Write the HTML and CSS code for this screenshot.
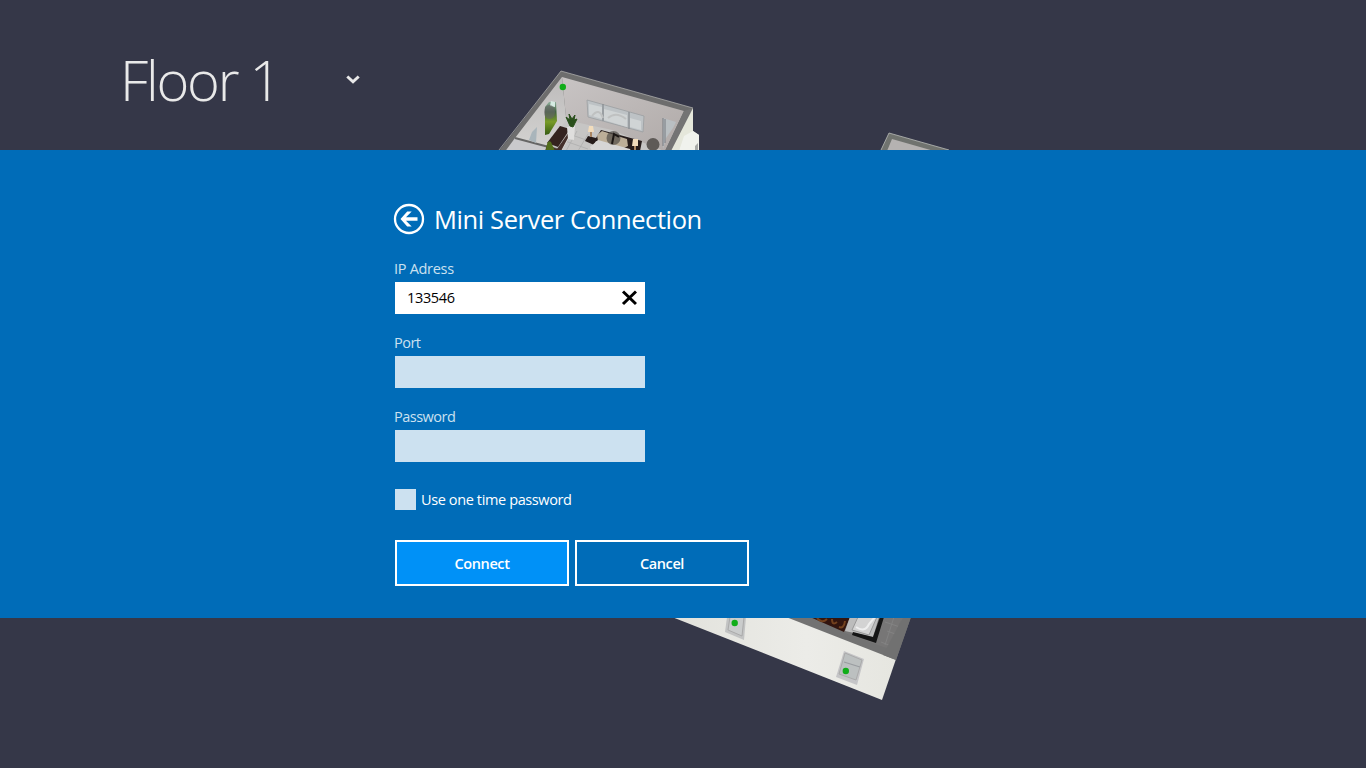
FILE: index.html
```html
<!DOCTYPE html>
<html lang="en">
<head>
<meta charset="utf-8">
<title>Mini Server Connection</title>
<link rel="stylesheet" href="styles.css">
</head>
<body>
<svg class="floorplan" viewBox="0 0 1366 768" aria-hidden="true">
  <defs>
    <linearGradient id="wall" x1="0" y1="0" x2="1" y2="1"><stop offset="0" stop-color="#c8c4c4"/><stop offset="1" stop-color="#b0aaa8"/></linearGradient>
    <linearGradient id="side" x1="0" y1="0" x2="0" y2="1"><stop offset="0" stop-color="#bdbbbb"/><stop offset="1" stop-color="#d3d2d0"/></linearGradient>
    <linearGradient id="facade" x1="0" y1="0" x2="1" y2="0"><stop offset="0" stop-color="#e2e2dc"/><stop offset=".6" stop-color="#ecece8"/><stop offset="1" stop-color="#e6e6e0"/></linearGradient>
    <linearGradient id="art" x1="0" y1="0" x2="0" y2="1"><stop offset="0" stop-color="#8fae9c"/><stop offset=".3" stop-color="#416340"/><stop offset=".6" stop-color="#789b27"/><stop offset="1" stop-color="#355b14"/></linearGradient>
  </defs>
  <!-- bedroom -->
  <path d="M561 71 693 108 672 151H499z" fill="#6d6d6d"/>
  <path d="M562 77 684 111 665 151H566V117z" fill="url(#wall)"/>
  <path d="M562 77 515 138 549 147 568 124 566 117z" fill="url(#side)"/>
  <path d="M566 120 546 151H664L612 130z" fill="#c6c5c4"/>
  <path d="M569 134 592 142M565 141 588 149M577 131 566 151M588 134 578 151" stroke="#aaa" stroke-width=".7"/>
  <path d="M515 138 560 150 558 153H504z" fill="#c9c9cc"/>
  <path d="M515 138 560 150" stroke="#666" stroke-width="2"/>
  <path d="M529 140 532 132 537 127 536 143z" fill="#a9b5bb"/>
  <path d="M545 107 549 102 556 102 557 121 549 134 545 135z" fill="url(#art)"/>
  <path d="M551 101 555 102 555 107 550 106z" fill="#d5ebe2"/>
  <ellipse cx="549.500" cy="112" rx="5.500" ry="7" fill="#666" opacity=".62"/>
  <path d="M561 143 569 132 570 136 562 150z" fill="#e2dfda"/>
  <path d="M547 143 560 126 570 129 558 147z" fill="#34231f"/>
  <path d="M547 145 557 149 569 132V136L561 151H545z" fill="#44302b"/>
  <path d="M546 150Q547 139 551 142L555 151z" fill="#526e1c"/>
  <path d="M567 127 575 126 574 140 568 139z" fill="#dfdedd"/>
  <path d="M570 126 566 117 570 120 569 114 572 119 575 115 574 120 577 119 573 127z" fill="#294f1b" stroke="#294f1b"/>
  <path d="M587 100 644 116 643 132 588 117z" fill="#bdc2c5" stroke="#9a9ea1" stroke-width=".8"/>
  <path d="M589 104 602 107 602 119 589 115zM604 109 627 115 627 127 604 120zM630 118 641 121 641 130 630 127z" fill="#d0d4d5"/>
  <path d="M603 104V121M629 112V129" stroke="#888d91" stroke-width="1.300"/>
  <path d="M592 116Q599 107 603 118M608 118Q616 111 626 119" fill="none" stroke="#bfc1c1" stroke-width="2"/>
  <path d="M585 141 588 136 596 138 601 130 642 141 640 151H631L596 141 594 145z" fill="#261c1b"/>
  <path d="M597 135 602 131 627 139 628 146 622 149 598 141z" fill="#bcae98"/>
  <path d="M590 147 598 140 630 149 631 151H592z" fill="#d6d5d5"/>
  <circle cx="613.500" cy="138" r="7" fill="#504b47" opacity=".7"/>
  <path d="M612 144 614 134 619 137" fill="none" stroke="#1c1715" stroke-width="2"/>
  <path d="M589 126 593 126 594 132 588 132zM633 139 638 139 638 146 632 146z" fill="#f2dcbc"/>
  <path d="M591 132V137M635 146V151" stroke="#a98562" stroke-width="2"/>
  <circle cx="653" cy="144.500" r="6.500" fill="#5e5a57"/>
  <path d="M663 118 676 122 673 128 666 138 663 149z" fill="#b9bfc2"/>
  <path d="M663 118V146M665 119V143" stroke="#777b80"/>
  <path d="M684 111 665 151H672L693 108z" fill="#747474"/>
  <path d="M693 108V131L699 135V151H671z" fill="#e5e7db"/>
  <path d="M684 136 693 131 699 135V151H679z" fill="#f0f2ed"/>
  <path d="M695 151V146L698 143V151z" fill="#a7aaa8"/>
  <path d="M499 150 561 71 693 108" fill="none" stroke="#b7b7b5" stroke-width=".7"/>
  <!-- right wing -->
  <path d="M889 133 949 150V152H880z" fill="#70736f"/>
  <path d="M892 139 934 151H887z" fill="#b5b2b1"/>
  <path d="M881 150 889 133 949 150" fill="none" stroke="#b9bbb7" stroke-width=".8"/>
  <!-- lower facade -->
  <path d="M672 617H790L896 659 882 700z" fill="url(#facade)"/>
  <path d="M786 617H911L896 660z" fill="#727272"/>
  <path d="M809 617H903L889 649 850 635z" fill="#777676"/>
  <path d="M810 617H850L844 632z" fill="#32150f"/>
  <path d="M817 618Q822 624 827 619M832 619Q832 626 837 622M839 627Q844 629 845 621" fill="none" stroke="#73411e" stroke-width="2"/>
  <path d="M850 617H879L873 637 845 631z" fill="#bcbcbc"/>
  <path d="M858 617 852 630 869 635 877 617" fill="#d3d3d3" stroke="#999"/>
  <path d="M856 627Q865 633 869 624L875 617" fill="none" stroke="#eee" stroke-width="2"/>
  <path d="M880 617H884L876 643 852 635 853 632 873 637z" fill="#151515"/>
  <path d="M894 617 885 645M903 617 892 648M887 631 898 635M881 642 891 646M885 622 903 628" stroke="#858585" stroke-width=".8"/>
  <path d="M903 617H911L896 660 883 655z" fill="#717171"/>
  <path d="M727 617H746L744 640 725 632z" fill="#c2c3c3"/>
  <path d="M730 617H744L742 636 728 630z" fill="#cacccc" stroke="#aaa"/>
  <path d="M844 651 864 659 857 685 836 677z" fill="#c5c5c7"/>
  <path d="M845 653 862 660 856 680 839 674z" fill="#bcc0c0" stroke="#aaa"/>
  <path d="M844 662 860 667" stroke="#999ca0" stroke-width="1.300"/>
  <g fill="#10ad19"><circle cx="562.800" cy="87" r="3.200"/><circle cx="734.700" cy="623" r="3.200"/><circle cx="845.800" cy="671" r="3.200"/></g>
</svg>
<div class="page">
  <header class="header">
    <h1 class="floor">Floor 1</h1>
    <svg class="chevron" width="14" height="10" viewBox="0 0 14 10"><path d="M1.300 1.500 7 6.800 12.700 1.500" fill="none" stroke="#e9e9e9" stroke-width="3"/></svg>
  </header>
  <main class="dialog">
    <form class="form">
      <div class="heading">
        <svg width="32" height="32" viewBox="0 0 32 32"><circle cx="16" cy="16" r="14" fill="none" stroke="#fff" stroke-width="2.300"/><path d="M14.200 8.500H18.700L13 14.300H24.500V17.700H13L18.700 23.500H14.200L7.500 16z" fill="#fff"/></svg>
        <h2 class="title">Mini Server Connection</h2>
      </div>
      <label class="label ip" for="ip">IP Adress</label>
      <div class="field active"><input id="ip" class="input" value="133546"><svg class="clear" width="16" height="16" viewBox="0 0 16 16"><path d="M2 1.500 15 14M15 1.500 2 14" stroke="#000" stroke-width="3"/></svg></div>
      <label class="label port" for="port">Port</label>
      <div class="field"><input id="port" class="input"></div>
      <label class="label password" for="password">Password</label>
      <div class="field"><input id="password" class="input" type="password"></div>
      <div class="once"><span class="box"></span><span class="once-text">Use one time password</span></div>
      <div class="actions"><button class="button primary" type="button"><span class="connect">Connect</span></button><button class="button" type="button"><span class="cancel">Cancel</span></button></div>
    </form>
  </main>
</div>
</body>
</html>
```
FILE: styles.css
```css
* { box-sizing: border-box; }
body {
  margin: 0;
  background: #353748;
  color: #fff;
  font-family: "Open Sans", "Noto Sans", sans-serif;
  overflow: hidden;
}
.floorplan { position: absolute; inset: 0; width: 1366px; height: 768px; z-index: -1; }
.page { display: grid; grid-template-rows: 150px 468px 150px; height: 768px; }
.header { display: flex; align-items: flex-start; padding: 41px 0 0 120px; }
.floor { margin: 0; width: 226px; font-size: 56px; line-height: 76px; font-weight: 300; letter-spacing: -2.2px; color: #e9e9e9; white-space: nowrap; }
.chevron { margin-top: 34px; }
.dialog { background: #006cb8; padding: 53px 0 0 395px; }
.form { display: flex; flex-direction: column; width: 360px; }
.heading { display: flex; align-items: center; height: 32px; margin-left: -2px; gap: 9px; }
.title { margin: 0; font-size: 25.5px; line-height: 32px; font-weight: 400; letter-spacing: -.4px; white-space: nowrap; }
.label { height: 20px; line-height: 20px; margin: 21px 0 3px -1px; font-size: 14.5px; color: #cce1f0; align-self: flex-start; letter-spacing: -.5px; }
.ip { margin-top: 24px; letter-spacing: -.3px; }
.label.port, .label.password { margin-top: 19px; }
.field { display: flex; align-items: center; width: 250px; height: 32px; background: #cce1f0; padding-right: 8px; }
.active { background: #fff; }
.input { flex: 1; min-width: 0; height: 32px; padding: 0 12px 2px; border: 0; outline: 0; background: transparent; font: 14.5px "Open Sans", sans-serif; letter-spacing: -.35px; color: #000; }
.once { display: flex; align-items: center; gap: 5px; height: 21px; margin-top: 27px; }
.box { width: 21px; height: 21px; background: #cce1f0; }
.once-text { font-size: 14.5px; line-height: 20px; letter-spacing: -.38px; }
.actions { display: flex; gap: 6px; margin-top: 30px; }
.button { width: 174px; height: 46px; padding: 0; border: 2px solid #fff; background: #006cb8; color: #fff; font: 600 14.5px "Open Sans", sans-serif; letter-spacing: -.4px; }
.primary { background: #0091f7; }
```
